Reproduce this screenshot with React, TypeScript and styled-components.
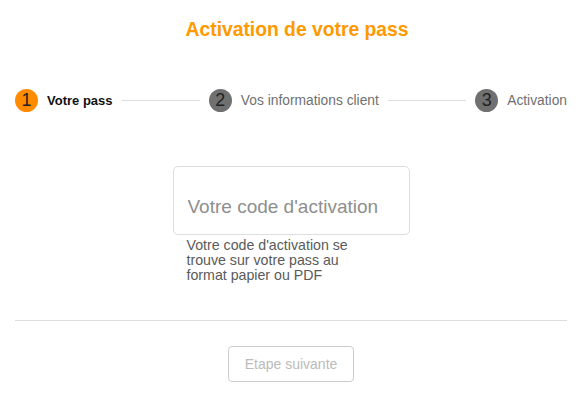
import { Fragment } from 'react';
import styled, { createGlobalStyle } from 'styled-components';

const GlobalStyle = createGlobalStyle`
    body {
        margin: 0;
        background: #ffffff;
        font-family: 'Liberation Sans', Arial, sans-serif;
    }
`;

const Page = styled.div`
    padding: 0 9px 0 15px;
    display: flex;
    flex-direction: column;
`;

const Title = styled.h1`
    margin: 19px 0 0;
    text-align: center;
    font-size: 19.3px;
    font-weight: 700;
    line-height: 22px;
    color: #ff9900;
    padding-left: 12px;
`;

const Stepper = styled.div`
    display: flex;
    align-items: center;
    margin-top: 47px;
    height: 24px;
`;

const Step = styled.div`
    display: flex;
    align-items: center;
    gap: 9px;
`;

const StepNumber = styled.span<{ active?: boolean }>`
    width: 23px;
    height: 23px;
    border-radius: 50%;
    display: flex;
    align-items: center;
    justify-content: center;
    font-size: 18px;
    line-height: 1;
    color: #222222;
    background: ${({ active }) => (active ? '#ff8c00' : '#707070')};
`;

const StepLabel = styled.span<{ active?: boolean }>`
    font-size: ${({ active }) => (active ? '13px' : '13.8px')};
    color: ${({ active }) => (active ? '#111111' : '#707070')};
    font-weight: ${({ active }) => (active ? 700 : 400)};
`;

const StepLine = styled.div`
    flex: 1;
    height: 1px;
    background: #dddddd;
    margin: 0 9px 0 9px;
`;

const Field = styled.div`
    align-self: center;
    margin-top: 54px;
    width: 237px;
    display: flex;
    flex-direction: column;
`;

const CodeInput = styled.input`
    box-sizing: border-box;
    width: 100%;
    height: 69px;
    padding: 13px 14px 0;
    border: 1px solid #dedede;
    border-radius: 5px;
    font-family: 'Liberation Sans', Arial, sans-serif;
    font-size: 19px;
    color: #333333;
    outline: none;

    &::placeholder {
        color: #8e8e8e;
    }
`;

const Hint = styled.p`
    margin: 3px 0 0;
    padding-left: 14px;
    max-width: 180px;
    font-size: 14.2px;
    line-height: 15px;
    color: #5a5a5a;
`;

const Divider = styled.hr`
    margin: 37px 0 0;
    border: 0;
    border-top: 1px solid #dddddd;
`;

const NextButton = styled.button`
    align-self: center;
    margin-top: 25px;
    width: 126px;
    height: 36px;
    border: 1px solid #cccccc;
    border-radius: 4px;
    background: #ffffff;
    font-family: 'Liberation Sans', Arial, sans-serif;
    font-size: 14px;
    color: #bbbbbb;
`;

const steps = ['Votre pass', 'Vos informations client', 'Activation'];

export default function App() {
    return (
        <>
            <GlobalStyle />
            <Page>
                <Title>Activation de votre pass</Title>
                <Stepper>
                    {steps.map((label, i) => (
                        <Fragment key={label}>
                            {i > 0 && <StepLine />}
                            <Step>
                                <StepNumber active={i === 0}>{i + 1}</StepNumber>
                                <StepLabel active={i === 0}>{label}</StepLabel>
                            </Step>
                        </Fragment>
                    ))}
                </Stepper>
                <Field>
                    <CodeInput placeholder="Votre code d'activation" />
                    <Hint>
                        Votre code d'activation se trouve sur votre pass au
                        format papier ou PDF
                    </Hint>
                </Field>
                <Divider />
                <NextButton disabled>Etape suivante</NextButton>
            </Page>
        </>
    );
}
